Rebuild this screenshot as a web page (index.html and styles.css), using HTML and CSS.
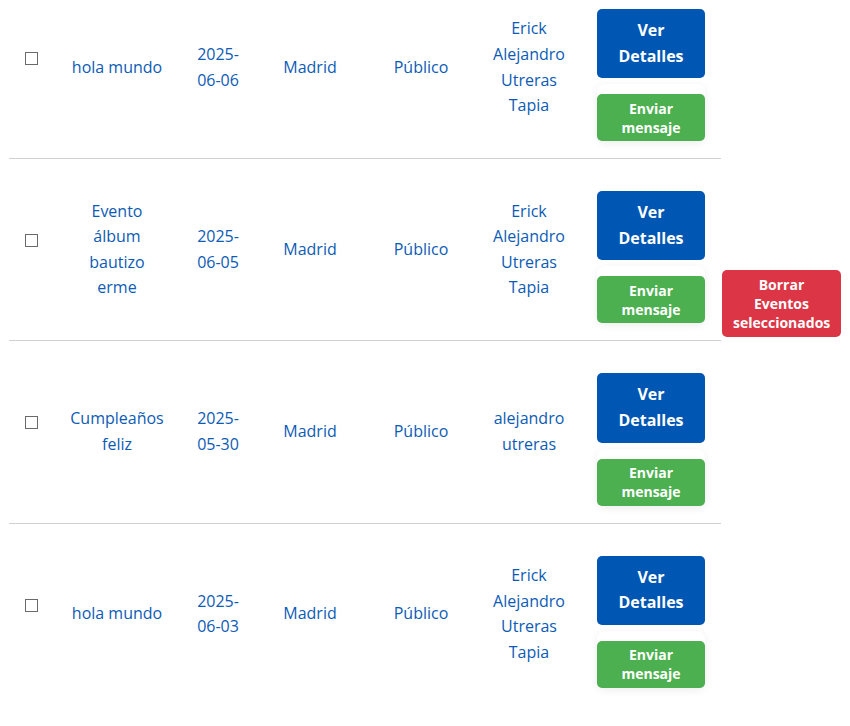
FILE: index.html
```html
<!DOCTYPE html>
<html lang="es">
<head>
<meta charset="utf-8">
<title>Eventos</title>
<link rel="stylesheet" href="styles.css">
</head>
<body>
<div class="page">
  <table class="events">
    <colgroup>
      <col class="c-check"><col class="c-name"><col class="c-date"><col class="c-city"><col class="c-vis"><col class="c-owner"><col class="c-actions">
    </colgroup>
    <tbody>
      <tr>
        <td class="check"><input type="checkbox"></td>
        <td>hola mundo</td>
        <td>2025-06-06</td>
        <td>Madrid</td>
        <td>Público</td>
        <td>Erick Alejandro Utreras Tapia</td>
        <td class="actions">
          <button class="btn btn-blue">Ver Detalles</button>
          <div class="send-form"><button class="btn btn-green">Enviar mensaje</button></div>
        </td>
      </tr>
      <tr>
        <td class="check"><input type="checkbox"></td>
        <td>Evento álbum bautizo erme</td>
        <td>2025-06-05</td>
        <td>Madrid</td>
        <td>Público</td>
        <td>Erick Alejandro Utreras Tapia</td>
        <td class="actions">
          <button class="btn btn-blue">Ver Detalles</button>
          <div class="send-form"><button class="btn btn-green">Enviar mensaje</button></div>
        </td>
      </tr>
      <tr>
        <td class="check"><input type="checkbox"></td>
        <td>Cumpleaños feliz</td>
        <td>2025-05-30</td>
        <td>Madrid</td>
        <td>Público</td>
        <td>alejandro utreras</td>
        <td class="actions">
          <button class="btn btn-blue">Ver Detalles</button>
          <div class="send-form"><button class="btn btn-green">Enviar mensaje</button></div>
        </td>
      </tr>
      <tr class="last">
        <td class="check"><input type="checkbox"></td>
        <td>hola mundo</td>
        <td>2025-06-03</td>
        <td>Madrid</td>
        <td>Público</td>
        <td>Erick Alejandro Utreras Tapia</td>
        <td class="actions">
          <button class="btn btn-blue">Ver Detalles</button>
          <div class="send-form"><button class="btn btn-green">Enviar mensaje</button></div>
        </td>
      </tr>
    </tbody>
  </table>
  <div class="bulk">
    <button class="btn btn-red">Borrar Eventos seleccionados</button>
  </div>
</div>
</body>
</html>
```

FILE: styles.css
```css
html, body {
  margin: 0;
  padding: 0;
  background: #fff;
}

body {
  font-family: "Open Sans", "Liberation Sans", sans-serif;
  font-size: 16px;
  line-height: 1.6;
  color: #0d5bb5;
}

.page {
  display: flex;
  align-items: flex-start;
  margin: -23px 0 0 9px;
}

.events {
  border-collapse: collapse;
  table-layout: fixed;
  width: 712px;
  flex: none;
}

.c-check { width: 44px; }
.c-name { width: 128px; }
.c-date { width: 74px; }
.c-city { width: 110px; }
.c-vis { width: 112px; }
.c-owner { width: 104px; }
.c-actions { width: 140px; }

.events td {
  text-align: center;
  vertical-align: middle;
  padding: 16px 15px;
  border-bottom: 1px solid #d0d0d0;
}

.events tr.last td {
  border-bottom: none;
}

.events td:nth-child(2) { padding: 16px 16px; }
.events td:nth-child(6) { padding: 16px 12px; }

.events td.check {
  padding: 16px 0;
  line-height: 0;
}

.events input[type="checkbox"] {
  -webkit-appearance: none;
  appearance: none;
  display: inline-block;
  box-sizing: border-box;
  width: 13px;
  height: 13px;
  margin: 0 0 18px;
  border: 1px solid #6a6a6a;
  border-radius: 0;
  background: #fff;
  vertical-align: middle;
}

.events td.actions {
  padding: 16px 16px 17px;
}

.btn {
  display: block;
  width: 100%;
  border: none;
  border-radius: 5px;
  font-family: "Open Sans", "Liberation Sans", sans-serif;
  font-weight: 700;
  color: #fff;
  text-align: center;
  cursor: pointer;
}

.btn-blue {
  background: #0056b3;
  font-size: 16px;
  line-height: 25.6px;
  padding: 9px 6px;
  margin-top: 16px;
}

.send-form {
  margin-top: 6px;
  padding-top: 10px;
  border-radius: 8px;
  box-shadow: 0 2px 8px rgba(0, 0, 0, 0.08);
}

.btn-green {
  background: #4caf50;
  font-size: 14px;
  line-height: 19px;
  padding: 4.5px 6px;
}

.bulk {
  flex: none;
  padding-top: 293px;
  margin-left: 1px;
}

.btn-red {
  width: 119px;
  background: #dc3545;
  font-size: 14px;
  line-height: 19px;
  padding: 5px 11px;
}
```
